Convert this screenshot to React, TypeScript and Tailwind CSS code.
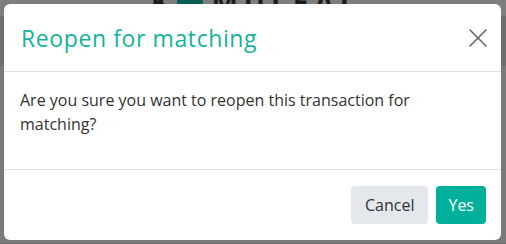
import { X } from 'lucide-react'

const FONT = { fontFamily: '"Open Sans", "Noto Sans", sans-serif' }

export default function App(): React.JSX.Element {
  return (
    <div className="relative w-[506px] h-[244px] overflow-hidden bg-[#7a7a7a]" style={FONT}>
      {/* page behind the backdrop */}
      <div className="absolute inset-0 flex flex-col">
        <div className="h-[30px] bg-[#7e7e7e] flex justify-center items-end gap-2 text-[#1c1c1c] text-[28px] font-bold leading-none -mt-[14px]">
          <span>K</span>
          <span className="w-[26px] h-[26px] rounded-full bg-[#0a5f52]" />
          <span className="tracking-[6px]">MULEAI</span>
        </div>
        <div className="h-[50px] bg-[#6f6f6f]" />
        <div className="flex-1 border-b border-[#6a6a6a]" />
      </div>

      {/* modal */}
      <div className="absolute left-[4px] top-[4px] w-[497px] h-[236px] bg-white rounded-[6px] flex flex-col">
        <div className="flex items-center justify-between pl-[17px] pr-[7px] h-[68px] border-b border-[#dee2e6]">
          <h2 className="text-[23px] leading-[36px] tracking-[0.6px] text-[#14b39c]">Reopen for matching</h2>
          <button className="text-[#6b6b6b]">
            <X size={32} strokeWidth={1.3} />
          </button>
        </div>
        <div className="p-4">
          <p className="mb-4 max-w-[440px] text-[16px] leading-[24px] text-[#333333]">
            Are you sure you want to reopen this transaction for matching?
          </p>
        </div>
        <div className="flex justify-end gap-2 px-[15px] py-4 border-t border-[#dee2e6] mt-auto">
          <button className="h-[38px] px-[14px] rounded-[4px] bg-[#e4e7ec] text-[16px] text-[#333333]">
            Cancel
          </button>
          <button className="h-[38px] px-3 rounded-[4px] bg-[#00b09a] text-[16px] text-white">
            Yes
          </button>
        </div>
      </div>
    </div>
  )
}
